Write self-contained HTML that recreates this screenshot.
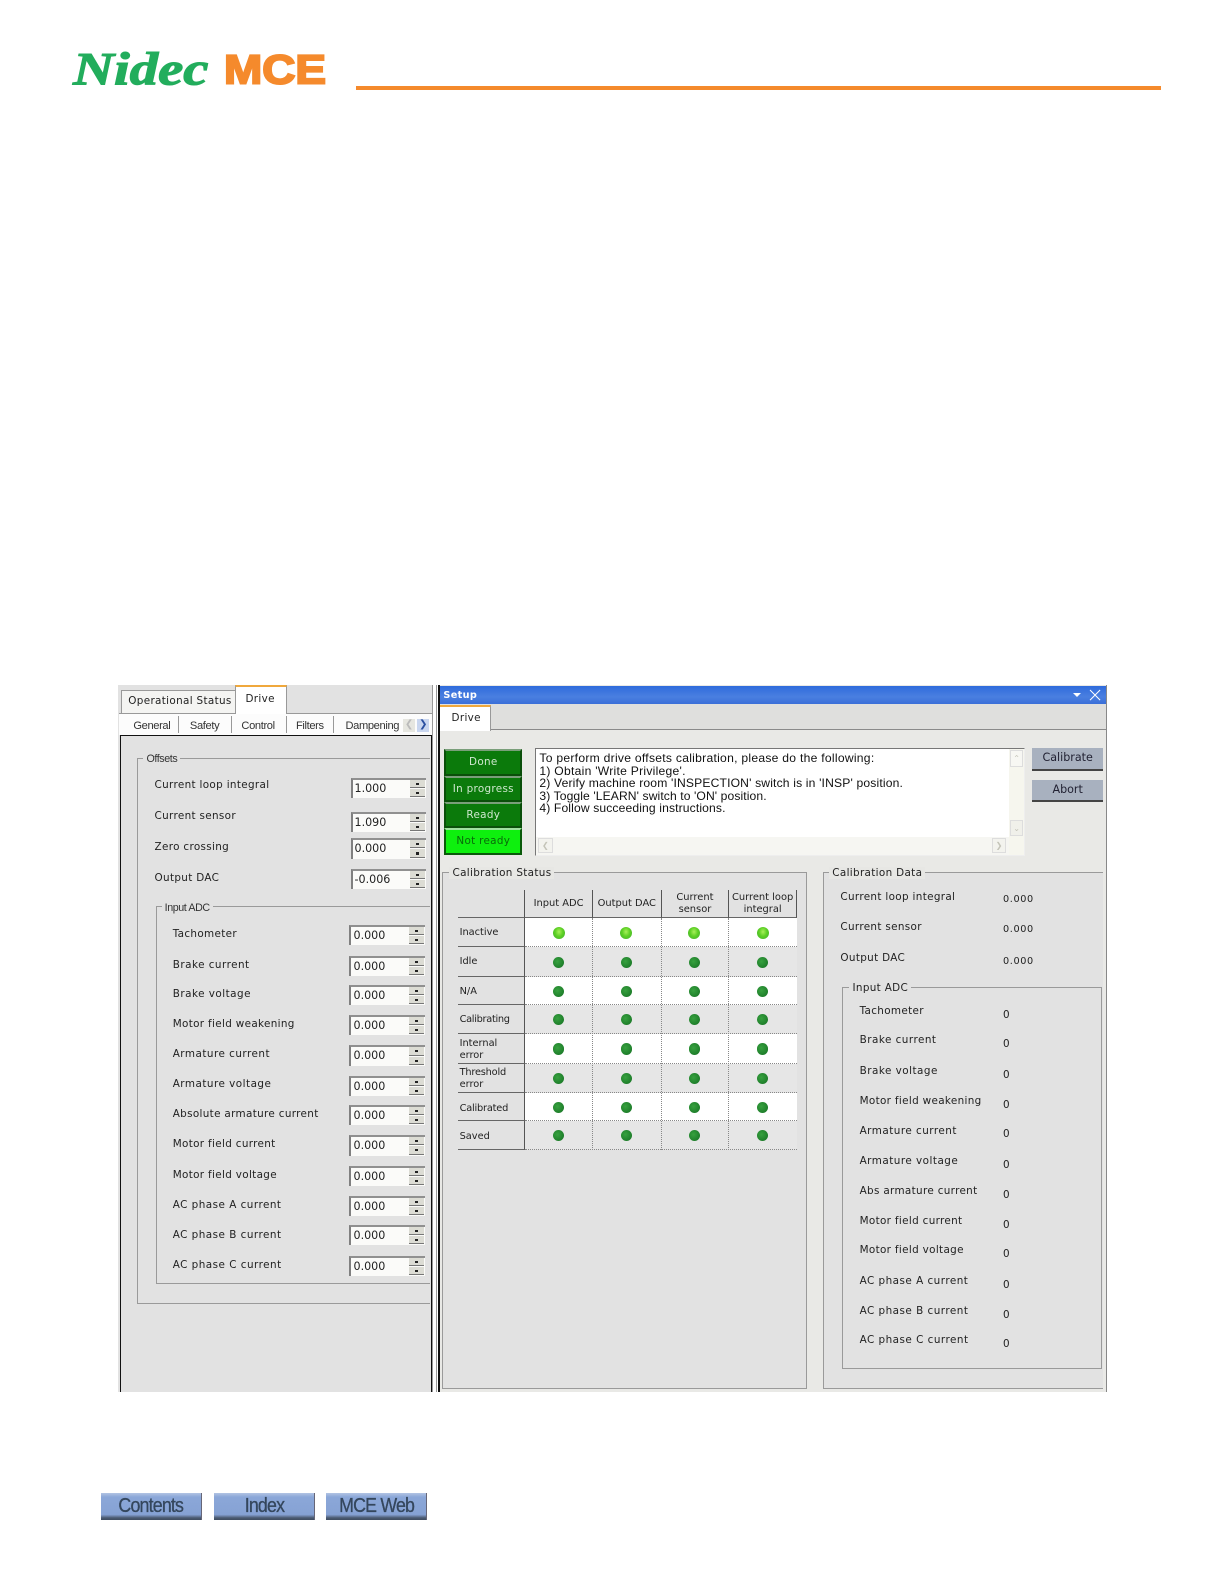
<!DOCTYPE html>
<html><head><meta charset="utf-8"><style>
html,body{margin:0;padding:0;background:#fff;overflow:hidden}
#p{position:relative;width:1212px;height:1569px;zoom:1.0101;overflow:hidden;background:#fff;font-family:"DejaVu Sans",sans-serif;font-size:10.3px;color:#222}
#p div{position:absolute;box-sizing:border-box}
.t{white-space:nowrap;line-height:12px;height:12px;letter-spacing:.33px}
.n{font-family:"Liberation Sans",sans-serif;font-size:12px;color:#333}
.o{font-family:"Liberation Sans",sans-serif;font-size:11px;color:#333;letter-spacing:-.35px}
.g{border:1px solid #9a9a9a}
.leg{background:#e2e2e2;padding:0 3px;white-space:nowrap;line-height:12px;height:12px;letter-spacing:.33px}
.leg.o{letter-spacing:-.4px;font-size:10.6px}
.i{width:75px;height:20px;background:#fbfbf9;border-left:2px solid #808080;border-top:2px solid #909090;padding-left:2px;line-height:17px;font-size:11px;color:#222;white-space:nowrap}
.s{width:15px;height:8px;background:#dcdcd4;border-bottom:1px solid #777}
.s:after{content:"";position:absolute;left:6px;top:3px;width:3px;height:2px;background:#222}
.b{width:77px;background:#0b7a0b;border:2px solid #0a4f0a;border-top-color:#7a9f7a;color:#cfe8cf;text-align:center;white-space:nowrap;letter-spacing:.3px}
.d{width:11px;height:11px;border-radius:50%;background:radial-gradient(circle at 40% 40%,#37a13f,#1f7f2b 70%,#17602a)}
.l{width:12px;height:12px;border-radius:50%;background:radial-gradient(ellipse at 50% 40%,#a8f05a 0,#5ed025 45%,#3fae2e 100%)}
.h{background:#e2e2e2;border-right:1px solid #555;border-bottom:1px solid #666;text-align:center;line-height:12px;font-size:9.8px;color:#222}
.r{background:#e2e2e2;border-right:1px solid #555;border-bottom:1px solid #666;padding-left:2px;font-size:9.7px;line-height:12px;color:#222}
.w{background:#fff;border-bottom:1px dotted #888}
.y{background:#e6e6e6;border-bottom:1px dotted #888}
.v{width:0;border-left:1px dotted #888}
.nb{width:100px;height:27px;background:linear-gradient(#b2c4e3 0,#8ba7d8 15%,#86a2d4 80%,#4b5a72 92%,#3f4c60);text-align:center;color:#34465c;font-family:"Liberation Sans",sans-serif;font-size:20px;line-height:26px;letter-spacing:-.9px;border-right:1px solid #667;-webkit-text-stroke:.3px #34465c}
.nb span{display:inline-block;transform:scaleX(.88)}
.ar{font-size:8px;line-height:14px;text-align:center;color:#c4c4b8}
.z{margin-top:1px}
.a{letter-spacing:.48px}
</style></head><body><div id="p">

<svg style="position:absolute;left:68px;top:48px" width="262" height="40" viewBox="0 0 262 40">
<text x="4" y="36" font-family="Liberation Serif" font-weight="bold" font-style="italic" font-size="46" fill="#22ad5c" stroke="#22ad5c" stroke-width="1.1" textLength="134" lengthAdjust="spacingAndGlyphs">Nidec</text>
<text x="153.5" y="35.2" font-family="Liberation Sans" font-weight="bold" font-size="40" fill="#f58a2c" stroke="#f58a2c" stroke-width="2" textLength="101" lengthAdjust="spacingAndGlyphs">MCE</text>
</svg>
<div style="left:352px;top:85px;width:797px;height:4px;background:#f58a2c"></div>

<div style="left:0;top:1px;width:1212px;height:1568px">
<!-- left panel -->
<div style="left:117px;top:677px;width:313px;height:700px;background:#e2e2e2"></div>
<div style="left:120px;top:682px;width:114px;height:24px;background:#f4f4f2;border:1px solid #999;border-bottom:0"></div>
<div class="t" style="left:127px;top:687px">Operational Status</div>
<div style="left:233px;top:677px;width:51px;height:30px;background:#fff;border:1px solid #999;border-bottom:0;border-top:2px solid #f0a83c"></div>
<div class="t" style="left:243px;top:685px">Drive</div>
<div style="left:118px;top:705px;width:116px;height:1px;background:#999"></div>
<div style="left:284px;top:705px;width:146px;height:1px;background:#999"></div>
<div style="left:118px;top:706px;width:312px;height:21px;background:#fcfcfc"></div>
<div class="t o" style="left:132px;top:712px">General</div>
<div class="t o" style="left:188px;top:712px">Safety</div>
<div class="t o" style="left:239px;top:712px">Control</div>
<div class="t o" style="left:293px;top:712px">Filters</div>
<div class="t o" style="left:342px;top:712px">Dampening</div>
<div style="left:176px;top:708px;width:1px;height:17px;background:#999"></div>
<div style="left:229px;top:708px;width:1px;height:17px;background:#999"></div>
<div style="left:283px;top:708px;width:1px;height:17px;background:#999"></div>
<div style="left:330px;top:708px;width:1px;height:17px;background:#999"></div>
<div style="left:399px;top:711px;width:12px;height:13px;background:#e6e6e0;color:#bbb;font-size:10px;line-height:12px;text-align:center">&#10094;</div>
<div style="left:413px;top:711px;width:12px;height:13px;background:#c9d6ef;color:#2a4fa0;font-size:10px;line-height:12px;text-align:center">&#10095;</div>
<div style="left:119px;top:727px;width:309px;height:650px;border:1px solid #111;border-bottom:0;background:#e2e2e2"></div>
<div style="left:428px;top:677px;width:5px;height:700px;background:#fff;border-left:1px solid #999;border-right:1px solid #999"></div>

<div class="g" style="left:136px;top:749px;width:290px;height:541px;border-right:0"></div>
<div class="leg o" style="left:142px;top:744px">Offsets</div>
<div class="g" style="left:154px;top:896px;width:272px;height:374px;border-right:0"></div>
<div class="leg o" style="left:160px;top:892px">Input ADC</div>

<div class="t" style="left:153px;top:770px">Current loop integral</div>
<div class="t" style="left:153px;top:801px">Current sensor</div>
<div class="t" style="left:153px;top:832px">Zero crossing</div>
<div class="t" style="left:153px;top:862px">Output DAC</div>
<div class="t" style="left:171px;top:918px">Tachometer</div>
<div class="t a" style="left:171px;top:948px">Brake current</div>
<div class="t a" style="left:171px;top:977px">Brake voltage</div>
<div class="t" style="left:171px;top:1007px">Motor field weakening</div>
<div class="t a" style="left:171px;top:1037px">Armature current</div>
<div class="t a" style="left:171px;top:1066px">Armature voltage</div>
<div class="t" style="left:171px;top:1096px">Absolute armature current</div>
<div class="t" style="left:171px;top:1126px">Motor field current</div>
<div class="t" style="left:171px;top:1156px">Motor field voltage</div>
<div class="t a" style="left:171px;top:1186px">AC phase A current</div>
<div class="t a" style="left:171px;top:1216px">AC phase B current</div>
<div class="t a" style="left:171px;top:1245px">AC phase C current</div>

<div class="i" style="left:347px;top:769px">1.000</div><div class="s" style="left:406px;top:771px"></div><div class="s" style="left:406px;top:780px"></div>
<div class="i" style="left:347px;top:803px">1.090</div><div class="s" style="left:406px;top:805px"></div><div class="s" style="left:406px;top:814px"></div>
<div class="i" style="left:347px;top:829px">0.000</div><div class="s" style="left:406px;top:831px"></div><div class="s" style="left:406px;top:840px"></div>
<div class="i" style="left:347px;top:859px">-0.006</div><div class="s" style="left:406px;top:861px"></div><div class="s" style="left:406px;top:870px"></div>
<div class="i" style="left:346px;top:915px">0.000</div><div class="s" style="left:405px;top:917px"></div><div class="s" style="left:405px;top:926px"></div>
<div class="i" style="left:346px;top:945px">0.000</div><div class="s" style="left:405px;top:947px"></div><div class="s" style="left:405px;top:956px"></div>
<div class="i" style="left:346px;top:974px">0.000</div><div class="s" style="left:405px;top:976px"></div><div class="s" style="left:405px;top:985px"></div>
<div class="i" style="left:346px;top:1004px">0.000</div><div class="s" style="left:405px;top:1006px"></div><div class="s" style="left:405px;top:1015px"></div>
<div class="i" style="left:346px;top:1034px">0.000</div><div class="s" style="left:405px;top:1036px"></div><div class="s" style="left:405px;top:1045px"></div>
<div class="i" style="left:346px;top:1064px">0.000</div><div class="s" style="left:405px;top:1066px"></div><div class="s" style="left:405px;top:1075px"></div>
<div class="i" style="left:346px;top:1093px">0.000</div><div class="s" style="left:405px;top:1095px"></div><div class="s" style="left:405px;top:1104px"></div>
<div class="i" style="left:346px;top:1123px">0.000</div><div class="s" style="left:405px;top:1125px"></div><div class="s" style="left:405px;top:1134px"></div>
<div class="i" style="left:346px;top:1153px">0.000</div><div class="s" style="left:405px;top:1155px"></div><div class="s" style="left:405px;top:1164px"></div>
<div class="i" style="left:346px;top:1183px">0.000</div><div class="s" style="left:405px;top:1185px"></div><div class="s" style="left:405px;top:1194px"></div>
<div class="i" style="left:346px;top:1212px">0.000</div><div class="s" style="left:405px;top:1214px"></div><div class="s" style="left:405px;top:1223px"></div>
<div class="i" style="left:346px;top:1242px">0.000</div><div class="s" style="left:405px;top:1244px"></div><div class="s" style="left:405px;top:1253px"></div>

<!-- right panel -->
<div style="left:434px;top:677px;width:662px;height:700px;background:#e9e9e6;border-left:2px solid #111;border-right:1px solid #888"></div>
<div style="left:436px;top:678px;width:659px;height:18px;background:linear-gradient(#2f6bdc,#4a7fe0 60%,#3a6fd8)"></div>
<div class="t z" style="left:439px;top:681px;color:#fff;font-weight:bold;font-size:9.6px">Setup</div>
<div style="left:1062px;top:685px;width:0;height:0;border:4px solid transparent;border-top:4px solid #fff"></div>
<svg style="position:absolute;left:1078px;top:681px" width="12" height="12"><path d="M1 1L11 11M11 1L1 11" stroke="#fff" stroke-width="1"/></svg>
<div style="left:436px;top:696px;width:659px;height:26px;background:#dfdfdd;border-bottom:1px solid #8a8a8a"></div>
<div style="left:436px;top:697px;width:50px;height:26px;background:#fff;border-right:1px solid #999;border-top:2px solid #f0a83c"></div>
<div class="t z" style="left:447px;top:703px">Drive</div>

<div class="b" style="left:440px;top:741px;height:26px;line-height:22px">Done</div>
<div class="b" style="left:440px;top:767px;height:26px;line-height:22px">In progress</div>
<div class="b" style="left:440px;top:793px;height:26px;line-height:22px">Ready</div>
<div class="b" style="left:440px;top:819px;height:26px;line-height:22px;background:#0ef00e;color:#0a6a0a;border-color:#0a5a0a;border-top-color:#9fe09f">Not ready</div>

<div style="left:530px;top:740px;width:485px;height:106px;background:#fff;border:1px solid #777;border-right-color:#eee;border-bottom-color:#eee"></div>
<div class="t n" style="left:534px;top:743px;letter-spacing:.27px;color:#111">To perform drive offsets calibration, please do the following:</div>
<div class="t n" style="left:534px;top:756px;letter-spacing:.26px;color:#111">1) Obtain 'Write Privilege'.</div>
<div class="t n" style="left:534px;top:768px;letter-spacing:.16px;color:#111">2) Verify machine room 'INSPECTION' switch is in 'INSP' position.</div>
<div class="t n" style="left:534px;top:781px;letter-spacing:.1px;color:#111">3) Toggle 'LEARN' switch to 'ON' position.</div>
<div class="t n" style="left:534px;top:793px;letter-spacing:.13px;color:#111">4) Follow succeeding instructions.</div>
<div style="left:999px;top:741px;width:15px;height:104px;background:#f6f6ee"></div>
<div class="ar" style="left:1000px;top:742px;width:13px;height:16px;background:#f7f7f3;border:1px solid #ddd">&#8963;</div>
<div class="ar" style="left:1000px;top:811px;width:13px;height:16px;background:#f0f0ea;border:1px solid #ddd">&#8964;</div>
<div style="left:531px;top:828px;width:468px;height:17px;background:#f6f6f2"></div>
<div class="ar" style="left:533px;top:829px;width:14px;height:14px;background:#f3f3ee;border:1px solid #ddd;line-height:12px">&#10094;</div>
<div class="ar" style="left:982px;top:829px;width:14px;height:14px;background:#f3f3ee;border:1px solid #ddd;line-height:12px">&#10095;</div>

<div style="left:1022px;top:740px;width:70px;height:22px;background:#a8b1bf;border-bottom:2px solid #444;text-align:center;line-height:20px;color:#223;font-size:11px">Calibrate</div>
<div style="left:1022px;top:771px;width:70px;height:22px;background:#a8b1bf;border-bottom:2px solid #444;text-align:center;line-height:20px;color:#223;font-size:11px">Abort</div>

<div style="left:438px;top:862px;width:361px;height:512px;background:#e2e2e2;border:1px solid #9a9a9a"></div>
<div class="leg" style="left:445px;top:857px;background:#e7e7e4">Calibration Status</div>
<div style="left:815px;top:862px;width:277px;height:512px;background:#e2e2e2;border:1px solid #9a9a9a;border-right:0"></div>
<div class="leg" style="left:821px;top:857px;background:#e7e7e4">Calibration Data</div>

<!-- table -->
<div class="h" style="left:453px;top:880px;width:67px;height:28px"></div>
<div class="h" style="left:520px;top:880px;width:67px;height:28px;line-height:27px">Input ADC</div>
<div class="h" style="left:587px;top:880px;width:68px;height:28px;line-height:27px">Output DAC</div>
<div class="h" style="left:655px;top:880px;width:67px;height:28px;padding-top:2px">Current<br>sensor</div>
<div class="h" style="left:722px;top:880px;width:67px;height:28px;padding-top:2px">Current loop<br>integral</div>

<div class="w" style="left:520px;top:908px;width:269px;height:29px"></div>
<div class="y" style="left:520px;top:937px;width:269px;height:29px"></div>
<div class="w" style="left:520px;top:966px;width:269px;height:28px"></div>
<div class="y" style="left:520px;top:994px;width:269px;height:29px"></div>
<div class="w" style="left:520px;top:1023px;width:269px;height:29px"></div>
<div class="y" style="left:520px;top:1052px;width:269px;height:29px"></div>
<div class="w" style="left:520px;top:1081px;width:269px;height:28px"></div>
<div class="y" style="left:520px;top:1109px;width:269px;height:29px"></div>
<div class="v" style="left:586px;top:908px;height:230px"></div>
<div class="v" style="left:654px;top:908px;height:230px"></div>
<div class="v" style="left:721px;top:908px;height:230px"></div>

<div class="r" style="left:453px;top:908px;width:67px;height:29px;line-height:30px">Inactive</div>
<div class="r" style="left:453px;top:937px;width:67px;height:29px;line-height:30px">Idle</div>
<div class="r" style="left:453px;top:966px;width:67px;height:28px;line-height:30px">N/A</div>
<div class="r" style="left:453px;top:994px;width:67px;height:29px;line-height:30px;letter-spacing:-.3px">Calibrating</div>
<div class="r" style="left:453px;top:1023px;width:67px;height:29px;padding-top:4px">Internal<br>error</div>
<div class="r" style="left:453px;top:1052px;width:67px;height:29px;padding-top:3px"><span style="letter-spacing:-.2px">Threshold</span><br>error</div>
<div class="r" style="left:453px;top:1081px;width:67px;height:28px;line-height:31px;letter-spacing:-.2px">Calibrated</div>
<div class="r" style="left:453px;top:1109px;width:67px;height:29px;line-height:31px">Saved</div>

<div class="l" style="left:547px;top:917px"></div><div class="l" style="left:614px;top:917px"></div><div class="l" style="left:681px;top:917px"></div><div class="l" style="left:749px;top:917px"></div>
<div class="d" style="left:547px;top:946px"></div><div class="d" style="left:615px;top:946px"></div><div class="d" style="left:682px;top:946px"></div><div class="d" style="left:749px;top:946px"></div>
<div class="d" style="left:547px;top:975px"></div><div class="d" style="left:615px;top:975px"></div><div class="d" style="left:682px;top:975px"></div><div class="d" style="left:749px;top:975px"></div>
<div class="d" style="left:547px;top:1003px"></div><div class="d" style="left:615px;top:1003px"></div><div class="d" style="left:682px;top:1003px"></div><div class="d" style="left:749px;top:1003px"></div>
<div class="d" style="left:547px;top:1032px"></div><div class="d" style="left:615px;top:1032px"></div><div class="d" style="left:682px;top:1032px"></div><div class="d" style="left:749px;top:1032px"></div>
<div class="d" style="left:547px;top:1061px"></div><div class="d" style="left:615px;top:1061px"></div><div class="d" style="left:682px;top:1061px"></div><div class="d" style="left:749px;top:1061px"></div>
<div class="d" style="left:547px;top:1090px"></div><div class="d" style="left:615px;top:1090px"></div><div class="d" style="left:682px;top:1090px"></div><div class="d" style="left:749px;top:1090px"></div>
<div class="d" style="left:547px;top:1118px"></div><div class="d" style="left:615px;top:1118px"></div><div class="d" style="left:682px;top:1118px"></div><div class="d" style="left:749px;top:1118px"></div>

<!-- calibration data -->
<div class="t" style="left:832px;top:881px">Current loop integral</div>
<div class="t z" style="left:993px;top:883px;font-size:9.6px;letter-spacing:.6px">0.000</div>
<div class="t" style="left:832px;top:911px">Current sensor</div>
<div class="t z" style="left:993px;top:913px;font-size:9.6px;letter-spacing:.6px">0.000</div>
<div class="t" style="left:832px;top:941px">Output DAC</div>
<div class="t z" style="left:993px;top:944px;font-size:9.6px;letter-spacing:.6px">0.000</div>
<div class="g" style="left:834px;top:976px;width:257px;height:378px"></div>
<div class="leg" style="left:841px;top:971px">Input ADC</div>
<div class="t" style="left:851px;top:994px">Tachometer</div><div class="t z" style="left:993px;top:997px">0</div>
<div class="t a" style="left:851px;top:1023px">Brake current</div><div class="t z" style="left:993px;top:1026px">0</div>
<div class="t a" style="left:851px;top:1053px">Brake voltage</div><div class="t z" style="left:993px;top:1056px">0</div>
<div class="t" style="left:851px;top:1083px">Motor field weakening</div><div class="t z" style="left:993px;top:1086px">0</div>
<div class="t a" style="left:851px;top:1113px">Armature current</div><div class="t z" style="left:993px;top:1115px">0</div>
<div class="t a" style="left:851px;top:1142px">Armature voltage</div><div class="t z" style="left:993px;top:1145px">0</div>
<div class="t" style="left:851px;top:1172px">Abs armature current</div><div class="t z" style="left:993px;top:1175px">0</div>
<div class="t" style="left:851px;top:1202px">Motor field current</div><div class="t z" style="left:993px;top:1205px">0</div>
<div class="t" style="left:851px;top:1231px">Motor field voltage</div><div class="t z" style="left:993px;top:1234px">0</div>
<div class="t a" style="left:851px;top:1261px">AC phase A current</div><div class="t z" style="left:993px;top:1264px">0</div>
<div class="t a" style="left:851px;top:1291px">AC phase B current</div><div class="t z" style="left:993px;top:1294px">0</div>
<div class="t a" style="left:851px;top:1320px">AC phase C current</div><div class="t z" style="left:993px;top:1323px">0</div>

<!-- nav -->
<div class="nb" style="left:100px;top:1477px"><span>Contents</span></div>
<div class="nb" style="left:212px;top:1477px"><span>Index</span></div>
<div class="nb" style="left:323px;top:1477px"><span>MCE Web</span></div>
</div>
</div></body></html>
